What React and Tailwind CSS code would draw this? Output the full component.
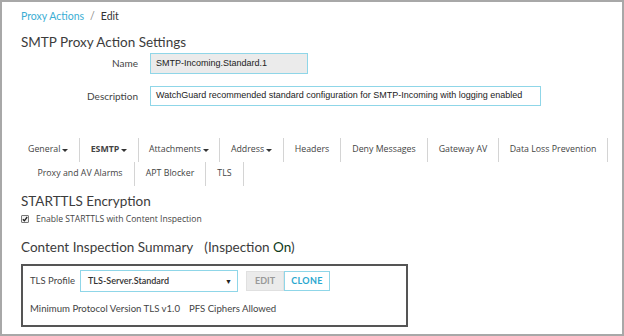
const tabsRow = [
  { label: "General", w: "w-[54px]", caret: true, left: true },
  { label: "ESMTP", w: "w-[59px]", caret: true, bold: true },
  { label: "Attachments", w: "w-[81px]", caret: true },
  { label: "Address", w: "w-[64px]", caret: true },
  { label: "Headers", w: "w-[57px]" },
  { label: "Deny Messages", w: "w-[87px]" },
  { label: "Gateway AV", w: "w-[71px]" },
  { label: "Data Loss Prevention", w: "w-[109px]" },
  { label: "Proxy and AV Alarms", w: "w-[109px]" },
  { label: "APT Blocker", w: "w-[71px]" },
  { label: "TLS", w: "w-[38px]" },
];

function Caret() {
  return (
    <span className="inline-block w-0 h-0 ml-[2px] border-x-[3px] border-x-transparent border-t-[3px] border-t-[#333]" />
  );
}

function Tab({ tab }) {
  return (
    <div
      className={`${tab.w} h-[24px] flex items-center ${tab.left ? "justify-start pl-[2px]" : "justify-center"} border-r border-[#d4d4d4] text-[8.8px] text-[#444] ${tab.bold ? "font-bold text-[#222]" : ""}`}
    >
      <span>{tab.label}</span>
      {tab.caret && <Caret />}
    </div>
  );
}

export default function App() {
  return (
    <div
      className="w-[624px] h-[336px] border-2 border-[#a8a8a8] bg-white pl-[19px] text-[#333] overflow-hidden"
      style={{ fontFamily: "Lato, 'Open Sans', sans-serif" }}
    >
      {/* breadcrumb */}
      <div className="mt-[7px] h-[14px] leading-[14px] text-[10.5px] flex items-center gap-[6px]">
        <span className="text-[#3aaed4]">Proxy Actions</span>
        <span className="text-[#888]">/</span>
        <span className="text-[#333]">Edit</span>
      </div>

      <div className="mt-[9px] h-[20px] leading-[20px] text-[13.5px] text-[#3c3c3c]">
        SMTP Proxy Action Settings
      </div>

      {/* name */}
      <div className="mt-[1px] flex items-center h-[21px]">
        <div className="w-[117px] text-right text-[10px] text-[#444]">Name</div>
        <div className="ml-[12px] w-[158px] h-[21px] bg-[#ebebeb] border border-[#8fd6e8] flex items-center pl-[5px] text-[9px] text-[#222] font-['Liberation_Sans',Arial,sans-serif]">
          SMTP-Incoming.Standard.1
        </div>
      </div>

      {/* description */}
      <div className="mt-[12px] flex items-center h-[20px]">
        <div className="w-[117px] text-right text-[10px] text-[#444]">Description</div>
        <div className="ml-[12px] w-[391px] h-[20px] bg-white border border-[#8fd6e8] flex items-center pl-[5px] text-[9px] text-[#222] font-['Liberation_Sans',Arial,sans-serif]">
          WatchGuard recommended standard configuration for SMTP-Incoming with logging enabled
        </div>
      </div>

      {/* tabs */}
      <div className="mt-[32px] ml-[5px] w-[590px] flex flex-wrap font-['Open_Sans',sans-serif]">
        {tabsRow.map((t) => (
          <Tab key={t.label} tab={t} />
        ))}
      </div>

      <div className="mt-[6px] h-[18px] leading-[18px] text-[13.5px] text-[#3c3c3c]">
        STARTTLS Encryption
      </div>

      <div className="mt-[3px] h-[12px] flex items-center font-['Open_Sans',sans-serif]">
        <span className="w-[8px] h-[8px] border border-[#777] bg-[#f2f2f2] rounded-[1px] flex items-center justify-center">
          <svg width="6" height="6" viewBox="0 0 6 6">
            <path d="M0.8 3.2 L2.4 4.8 L5.2 1" stroke="#222" strokeWidth="1.3" fill="none" />
          </svg>
        </span>
        <span className="ml-[7px] text-[8.6px] text-[#444]">Enable STARTTLS with Content Inspection</span>
      </div>

      <div className="mt-[12px] h-[20px] leading-[20px] text-[13.5px] text-[#3c3c3c] flex">
        <span>Content Inspection Summary</span>
        <span className="ml-[11px]">
          (Inspection <span className="text-[#0e3a18]">On</span>)
        </span>
      </div>

      {/* summary box */}
      <div className="mt-[7px] w-[387px] h-[63px] border-2 border-[#555] pl-[7px] pt-[4px]">
        <div className="flex items-center h-[22px]">
          <div className="w-[50px] text-[9.5px] text-[#444]">TLS Profile</div>
          <div className="w-[158px] h-[22px] border border-[#8fd6e8] flex items-center pl-[7px] pr-[5px] text-[9px] font-semibold text-[#333]">
            <span className="flex-1">TLS-Server.Standard</span>
            <span className="text-[7px] text-[#222]">▼</span>
          </div>
          <div className="ml-[8px] w-[38px] h-[20px] bg-[#ebebeb] border border-[#e0e0e0] flex items-center justify-center text-[9px] font-bold text-[#999]">
            EDIT
          </div>
          <div className="w-[46px] h-[20px] border border-[#8fd6e8] flex items-center justify-center text-[9px] font-bold text-[#2aa8cf] tracking-[0.3px]">
            CLONE
          </div>
        </div>
        <div className="mt-[11px] h-[12px] flex items-center text-[9.6px] text-[#444]">
          <span className="w-[159px] shrink-0 whitespace-nowrap">Minimum Protocol Version TLS v1.0</span>
          <span className="whitespace-nowrap">PFS Ciphers Allowed</span>
        </div>
      </div>
    </div>
  );
}
